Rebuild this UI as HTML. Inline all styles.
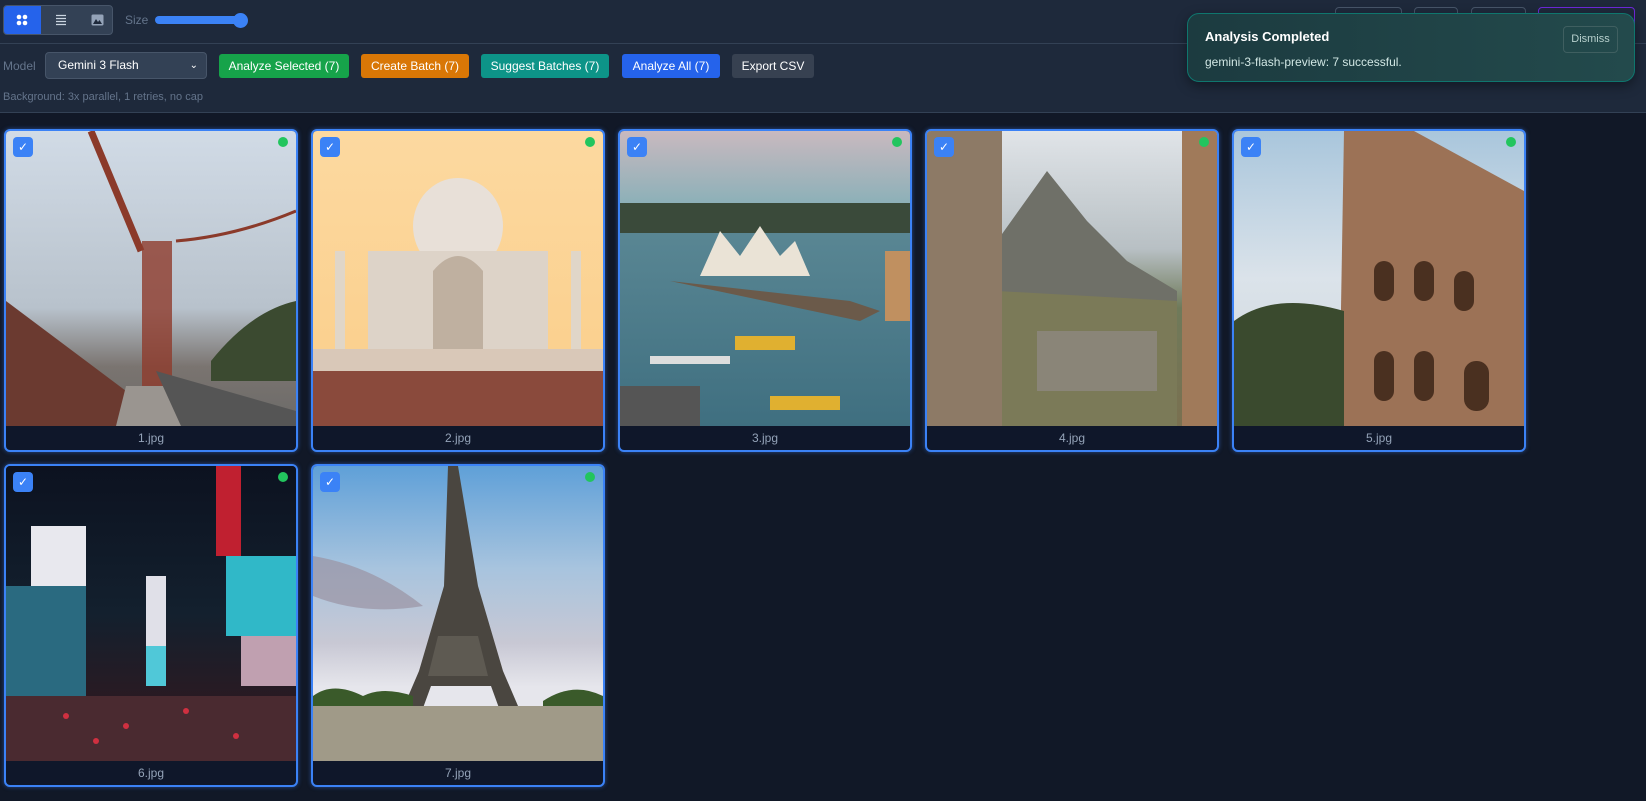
<!DOCTYPE html>
<html><head><meta charset="utf-8"><style>
*{box-sizing:border-box;margin:0;padding:0}
body{width:1646px;height:801px;overflow:hidden;background:#111827;font-family:"Liberation Sans",sans-serif;position:relative}
.top{position:absolute;left:0;top:0;width:1646px;height:112px;background:#1e293b}
.hr{position:absolute;left:0;width:1646px;height:1px;background:#334155}
.seg{position:absolute;left:3px;top:5px;width:110px;height:30px;border:1px solid #475569;border-radius:4px;background:#334155;overflow:hidden}
.seg .a{position:absolute;left:0;top:0;width:37px;height:28px;background:#2563eb}
.btn{position:absolute;top:54px;height:24px;border-radius:3px;color:#fff;font-size:12px;line-height:24px;text-align:center}
.card{position:absolute;width:294px;height:323px;border:2px solid #3b82f6;border-radius:6px;background:#0f172a;overflow:hidden;box-shadow:0 0 4px rgba(59,130,246,.5)}
.img{position:absolute;left:0;top:0;width:290px;height:295px;overflow:hidden}
.lbl{position:absolute;left:0;top:295px;width:290px;height:24px;line-height:24px;text-align:center;color:#94a3b8;font-size:12px}
.cb{position:absolute;left:7px;top:6px;width:20px;height:20px;border-radius:4px;background:#3b82f6;color:#fff;font-size:12px;line-height:20px;text-align:center}
.dot{position:absolute;right:8px;top:6px;width:10px;height:10px;border-radius:50%;background:#22c55e}
.ghost{position:absolute;top:7px;height:29px;border:1px solid #475569;border-radius:4px}
</style></head><body>
<div class="top"></div>
<div class="seg"><div class="a"></div>
<svg style="position:absolute;left:12px;top:8px" width="12" height="12"><circle cx="3" cy="3" r="2.3" fill="#fff"/><circle cx="9" cy="3" r="2.3" fill="#fff"/><circle cx="3" cy="9" r="2.3" fill="#fff"/><circle cx="9" cy="9" r="2.3" fill="#fff"/></svg>
<svg style="position:absolute;left:51px;top:8px" width="12" height="12" stroke="#cbd5e1" stroke-width="1.3"><path d="M1 1.5h10M1 4.5h10M1 7.5h10M1 10.5h10"/></svg>
<svg style="position:absolute;left:87px;top:8px" width="13" height="12"><rect x="0.5" y="0.5" width="12" height="11" rx="1.5" fill="#94a3b8"/><path d="M2 10l3-5 2 3 1.5-2 2.5 4z" fill="#1e293b"/></svg>
</div>
<div style="position:absolute;left:125px;top:13px;color:#64748b;font-size:12px">Size</div>
<div style="position:absolute;left:155px;top:16px;width:92px;height:8px;border-radius:4px;background:#3b82f6"></div>
<div style="position:absolute;left:233px;top:13px;width:15px;height:15px;border-radius:50%;background:#3b82f6"></div>
<div class="hr" style="top:43px"></div>
<div class="ghost" style="left:1335px;width:67px"></div>
<div class="ghost" style="left:1414px;width:44px"></div>
<div class="ghost" style="left:1471px;width:55px"></div>
<div class="ghost" style="left:1538px;width:97px;border-color:#6d28d9"></div>
<div style="position:absolute;left:3px;top:59px;color:#64748b;font-size:12px">Model</div>
<div style="position:absolute;left:45px;top:52px;width:162px;height:27px;border:1px solid #475569;border-radius:4px;background:#334155;color:#fff;font-size:12px;line-height:25px;padding-left:12px">Gemini 3 Flash<span style="position:absolute;right:8px;top:0;font-size:10px">&#8964;</span></div>
<div class="btn" style="left:219px;width:130px;background:#16a34a">Analyze Selected (7)</div>
<div class="btn" style="left:361px;width:108px;background:#d97706">Create Batch (7)</div>
<div class="btn" style="left:481px;width:128px;background:#0d9488">Suggest Batches (7)</div>
<div class="btn" style="left:622px;width:98px;background:#2563eb">Analyze All (7)</div>
<div class="btn" style="left:732px;width:82px;background:#374151">Export CSV</div>
<div style="position:absolute;left:3px;top:91px;color:#64748b;font-size:11px">Background: 3x parallel, 1 retries, no cap</div>
<div class="hr" style="top:112px"></div>

<div class="card" style="left:4px;top:129px"><div class="img" style="background:linear-gradient(180deg,#d1dbe6 0%,#b8c2cc 60%,#7a7470 80%,#6b6a68 100%)">
<svg width="290" height="295"><path d="M85 0l50 120" stroke="#8b3a2a" stroke-width="7"/><rect x="136" y="110" width="30" height="150" fill="#8f3b2c" opacity=".8"/><path d="M170 110q60-5 120-30" stroke="#8b3a2a" stroke-width="3" fill="none"/><path d="M205 230q40-50 85-60v80h-85z" fill="#3b4a30"/><path d="M0 170l120 90v35H0z" fill="#6b3a30"/><path d="M120 255h40l40 40h-90z" fill="#9a9590"/><path d="M150 240l140 40v15H175z" fill="#555"/></svg></div><div class="lbl">1.jpg</div><div class="cb">✓</div><div class="dot"></div></div>

<div class="card" style="left:311px;top:129px"><div class="img" style="background:linear-gradient(180deg,#fcd9a0,#fbd190 70%)">
<svg width="290" height="295"><ellipse cx="145" cy="95" rx="45" ry="48" fill="#e8e0d8"/><rect x="55" y="120" width="180" height="100" fill="#ddd3c8"/><rect x="22" y="120" width="10" height="100" fill="#e0d6c8"/><rect x="258" y="120" width="10" height="100" fill="#e0d6c8"/><path d="M120 140q25-30 50 0v80h-50z" fill="#bfb0a0"/><rect x="0" y="218" width="290" height="22" fill="#d9c8b8"/><rect x="0" y="240" width="290" height="55" fill="#8a4a3c"/></svg></div><div class="lbl">2.jpg</div><div class="cb">✓</div><div class="dot"></div></div>

<div class="card" style="left:618px;top:129px"><div class="img" style="background:linear-gradient(180deg,#c9b9bf 0%,#8bb0b8 25%,#5a8794 32%,#3f6f80 100%)">
<svg width="290" height="295"><rect y="72" width="290" height="30" fill="#3a4a3a"/><path d="M80 145l20-45 20 25 20-30 20 30 15-15 15 35z" fill="#eae3d6"/><path d="M50 150l180 20 30 10-20 10z" fill="#6b5a4a"/><rect x="265" y="120" width="25" height="70" fill="#c09060"/><rect x="115" y="205" width="60" height="14" fill="#e0b030"/><rect x="30" y="225" width="80" height="8" fill="#ddd"/><rect x="150" y="265" width="70" height="14" fill="#e0b030"/><rect x="0" y="255" width="80" height="40" fill="#555"/></svg></div><div class="lbl">3.jpg</div><div class="cb">✓</div><div class="dot"></div></div>

<div class="card" style="left:925px;top:129px"><div class="img" style="background:linear-gradient(180deg,#e0e4e8 0%,#b8c0c4 40%,#6f7a5a 60%,#7a7050 100%)">
<svg width="290" height="295"><path d="M70 110l50-70 40 50 40 40 50 30v60H70z" fill="#6f7068"/><path d="M70 160l180 10v125H70z" fill="#7b7a58"/><path d="M0 0h75v295H0z" fill="#8d7a66"/><path d="M255 0h35v295h-35z" fill="#a07a5a"/><rect x="110" y="200" width="120" height="60" fill="#8a8578"/></svg></div><div class="lbl">4.jpg</div><div class="cb">✓</div><div class="dot"></div></div>

<div class="card" style="left:1232px;top:129px"><div class="img" style="background:linear-gradient(180deg,#a9c6dc,#dbe3ea 50%,#cbd3d8)">
<svg width="290" height="295"><path d="M110 0h70l110 60v235H105z" fill="#9c7256"/><path d="M0 190q40-30 110-10v115H0z" fill="#3a4a2e"/><g fill="#4a3020"><rect x="140" y="130" width="20" height="40" rx="10"/><rect x="180" y="130" width="20" height="40" rx="10"/><rect x="220" y="140" width="20" height="40" rx="10"/><rect x="140" y="220" width="20" height="50" rx="10"/><rect x="180" y="220" width="20" height="50" rx="10"/><rect x="230" y="230" width="25" height="50" rx="12"/></g></svg></div><div class="lbl">5.jpg</div><div class="cb">✓</div><div class="dot"></div></div>

<div class="card" style="left:4px;top:464px"><div class="img" style="background:linear-gradient(180deg,#0c1220 0%,#13202e 50%,#2a1a22 80%,#3a2028 100%)">
<svg width="290" height="295"><rect x="25" y="60" width="55" height="80" fill="#e8e8ee"/><rect x="0" y="120" width="80" height="110" fill="#2a6a80"/><rect x="210" y="0" width="25" height="90" fill="#c02030"/><rect x="220" y="90" width="70" height="80" fill="#30b8c8"/><rect x="140" y="110" width="20" height="70" fill="#e0e0e8"/><rect x="140" y="180" width="20" height="40" fill="#50c8d8"/><rect x="235" y="170" width="55" height="50" fill="#c0a0b0"/><path d="M0 230h290v65H0z" fill="#4a2a30"/><g fill="#d03040"><circle cx="60" cy="250" r="3"/><circle cx="120" cy="260" r="3"/><circle cx="180" cy="245" r="3"/><circle cx="230" cy="270" r="3"/><circle cx="90" cy="275" r="3"/></g></svg></div><div class="lbl">6.jpg</div><div class="cb">✓</div><div class="dot"></div></div>

<div class="card" style="left:311px;top:464px"><div class="img" style="background:linear-gradient(180deg,#5fa0d8 0%,#a8c4de 35%,#c8c8d4 60%,#e6e6ec 75%)">
<svg width="290" height="295"><path d="M0 90q60 10 110 50q-60 10-110-10z" fill="#9a93a3" opacity=".7"/><path d="M135 0h10l20 120 25 85 30 70h-22l-20-55h-60l-20 55h-22l30-70 25-85z" fill="#4a4640"/><path d="M125 170h40l10 40h-60z" fill="#5e5a52"/><rect x="0" y="240" width="290" height="55" fill="#a09a88"/><path d="M0 230q20-15 50 0 20-10 50 0v10H0z" fill="#3a5a2a"/><path d="M230 235q30-20 60 -5v10h-60z" fill="#3a5a2a"/></svg></div><div class="lbl">7.jpg</div><div class="cb">✓</div><div class="dot"></div></div>

<div style="position:absolute;left:1187px;top:13px;width:448px;height:69px;border:1px solid #0f766e;border-radius:12px;background:linear-gradient(90deg,#1c3b40,#234a4c);box-shadow:0 4px 12px rgba(0,0,0,.4)">
<div style="position:absolute;left:17px;top:15px;color:#fff;font-weight:bold;font-size:13px">Analysis Completed</div>
<div style="position:absolute;left:17px;top:41px;color:#d1e7e4;font-size:12px">gemini-3-flash-preview: 7 successful.</div>
<div style="position:absolute;left:375px;top:12px;width:55px;height:27px;border:1px solid #3f5f60;border-radius:4px;color:#b6cfcc;font-size:11px;line-height:25px;text-align:center">Dismiss</div>
</div>
</body></html>
